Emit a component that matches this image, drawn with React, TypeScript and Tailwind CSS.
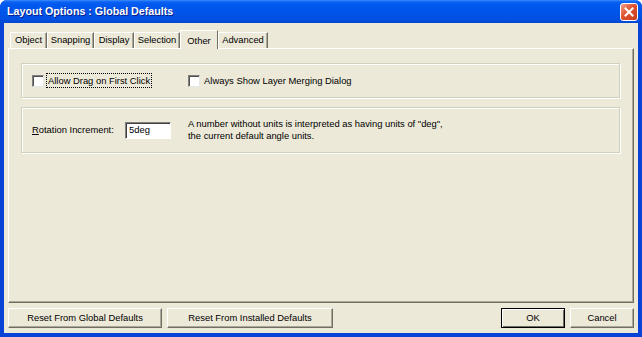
const tabs = [
  { label: "Object", w: "w-[37px]" },
  { label: "Snapping", w: "w-[47px]" },
  { label: "Display", w: "w-[40px]" },
  { label: "Selection", w: "w-[46px]" },
  { label: "Other", w: "w-[38px]", active: true },
  { label: "Advanced", w: "w-[50px]" },
];

const Checkbox = () => (
  <span className="block w-[12px] h-[12px] bg-white border border-t-[#808080] border-l-[#808080] border-b-[#e8e8e8] border-r-[#e8e8e8] shadow-[inset_1px_1px_0_#505050]" />
);

const Button = ({ label, w, isDefault }: { label: string; w: string; isDefault?: boolean }) => (
  <button
    className={`${w} h-[20px] flex items-center justify-center bg-[#ECE9D8] text-black ${
      isDefault
        ? "border border-black shadow-[inset_1px_1px_0_#fff,inset_-1px_-1px_0_#716F64]"
        : "border border-t-white border-l-white border-b-[#716F64] border-r-[#716F64] shadow-[inset_-1px_-1px_0_#ACA899]"
    }`}
  >
    {label}
  </button>
);

export default function App() {
  return (
    <div className="w-[642px] h-[337px] flex flex-col bg-[#0842D6] rounded-t-[7px] overflow-hidden font-['Liberation_Sans',Arial,sans-serif] text-[9.4px] text-black">
      {/* title bar */}
      <div className="h-[23px] flex items-center justify-between pl-[7px] pr-[4px] bg-[linear-gradient(to_bottom,#3C8CFF_0px,#0A60F0_2px,#0058EE_5px,#0055EA_50%,#0050E0_85%,#0046D0_100%)]">
        <span className="text-white font-bold text-[10.7px] [text-shadow:1px_1px_0_#0A1E8C]">
          Layout Options : Global Defaults
        </span>
        <div className="w-[18px] h-[18px] mt-[1px] rounded-[3px] border border-white bg-[linear-gradient(135deg,#F0A08A,#E0512F_45%,#C8401E)] flex items-center justify-center">
          <svg width="10" height="10" viewBox="0 0 10 10">
            <path d="M1.5 1.5 L8.5 8.5 M8.5 1.5 L1.5 8.5" stroke="white" strokeWidth="2" strokeLinecap="square" />
          </svg>
        </div>
      </div>

      {/* client area */}
      <div className="flex-1 mx-[4px] mb-[4px] bg-[#ECE9D8] flex flex-col">
        {/* tab strip */}
        <div className="h-[25px] pt-[7px] pl-[6px] flex items-end">
          {tabs.map((t) =>
            t.active ? (
              <div
                key={t.label}
                className={`${t.w} h-[19px] -mb-[1px] relative z-10 bg-[#ECE9D8] border-t border-l border-white border-r border-r-[#716F64] flex items-start justify-center pt-[3px]`}
              >
                {t.label}
              </div>
            ) : (
              <div
                key={t.label}
                className={`${t.w} h-[16px] border-t border-l border-white border-r border-r-[#716F64] shadow-[inset_-1px_0_0_#ACA899] flex items-center justify-center`}
              >
                {t.label}
              </div>
            )
          )}
        </div>

        {/* tab panel */}
        <div className="flex-1 mx-[4px] border-t border-l border-white border-r border-b border-r-[#716F64] border-b-[#716F64] shadow-[inset_-1px_-1px_0_#ACA899] pt-[14px] pl-[12px]">
          <div className="w-[599px] h-[35px] border border-[#D0D0BF] shadow-[inset_1px_1px_0_#fff,1px_1px_0_#fff] flex items-center pl-[10px]">
            <Checkbox />
            <span className="ml-[2px] px-[1px] py-[1px] border border-dotted border-black leading-[11px]">
              Allow Drag on First Click
            </span>
            <span className="ml-[36px]">
              <Checkbox />
            </span>
            <span className="ml-[3px] px-[1px] leading-[11px]">Always Show Layer Merging Dialog</span>
          </div>

          <div className="mt-[9px] w-[599px] h-[46px] border border-[#D0D0BF] shadow-[inset_1px_1px_0_#fff,1px_1px_0_#fff] flex items-center pl-[10px]">
            <span className="w-[93px]">
              <span className="underline">R</span>otation Increment:
            </span>
            <div className="w-[46px] h-[17px] bg-white border border-t-[#808080] border-l-[#808080] border-b-white border-r-white shadow-[inset_1px_1px_0_#404040] flex items-center pl-[3px]">
              5deg
            </div>
            <div className="ml-[17px] leading-[12px]">
              <div>A number without units is interpreted as having units of "deg",</div>
              <div>the current default angle units.</div>
            </div>
          </div>
        </div>

        {/* bottom buttons */}
        <div className="h-[30px] flex items-center px-[4px]">
          <Button label="Reset From Global Defaults" w="w-[154px]" />
          <div className="ml-[5px]">
            <Button label="Reset From Installed Defaults" w="w-[166px]" />
          </div>
          <div className="ml-auto flex gap-[5px]">
            <Button label="OK" w="w-[64px]" isDefault />
            <Button label="Cancel" w="w-[64px]" />
          </div>
        </div>
      </div>
    </div>
  );
}
